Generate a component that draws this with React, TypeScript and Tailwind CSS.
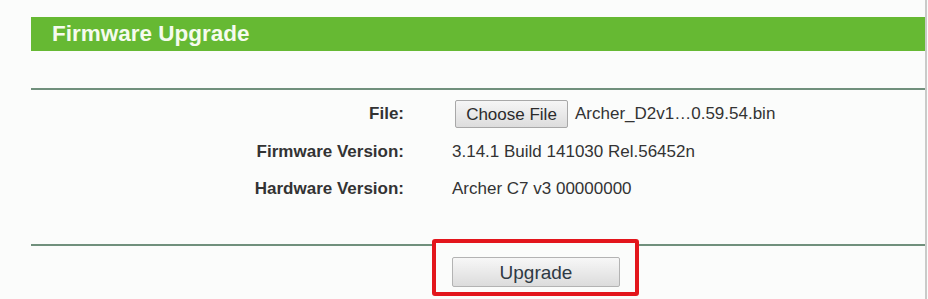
export default function App() {
  const rows = [
    { label: "Firmware Version:", value: "3.14.1 Build 141030 Rel.56452n", h: "h-[38px]" },
    { label: "Hardware Version:", value: "Archer C7 v3 00000000", h: "h-[36px]" },
  ];

  return (
    <div className="w-[928px] h-[299px] bg-[#fbfcfb] font-['Liberation_Sans',Arial,sans-serif] overflow-hidden">
      <div className="relative w-[927px] h-full border-r-2 border-[#c9cbc9] pt-[17px] pl-[31px]">
        <div className="h-[34px] bg-[#66b933] pl-[21px] flex items-center">
          <h1 className="text-[22.5px] font-bold text-[#f5fbee] leading-none">Firmware Upgrade</h1>
        </div>

        <div className="mt-[37px] h-[2px] bg-[#70907c]" />

        <div className="mt-[5px]">
          <div className="flex items-center h-[38px]">
            <div className="w-[373px] text-right text-[17px] font-bold text-[#333]">File:</div>
            <div className="ml-[51px] flex items-center">
              <button className="h-[28px] w-[113px] border border-[#a8a8a8] rounded-[2px] bg-gradient-to-b from-[#f6f6f6] to-[#dddddd] text-[17px] text-[#2b2b2b] leading-none">
                Choose File
              </button>
              <span className="ml-[7px] text-[17px] text-[#333]">Archer_D2v1…0.59.54.bin</span>
            </div>
          </div>
          {rows.map((r) => (
            <div key={r.label} className={`flex items-center ${r.h}`}>
              <div className="w-[373px] text-right text-[17px] font-bold text-[#333]">{r.label}</div>
              <div className="ml-[48px] text-[17px] text-[#333]">{r.value}</div>
            </div>
          ))}
        </div>

        <div className="mt-[37px] h-[2px] bg-[#70907c]" />

        <div className="absolute left-[432px] top-[239px] w-[207px] h-[57px] border-4 border-[#e3161c] rounded-[3px] bg-[#fbfcfb] pl-[16px] pt-[14px]">
          <button className="w-[168px] h-[30px] border border-[#b3b3b3] rounded-[2px] bg-gradient-to-b from-[#f7f7f7] to-[#dcdcdc] text-[19px] text-[#2f3a44] leading-none">
            Upgrade
          </button>
        </div>
      </div>
    </div>
  );
}
